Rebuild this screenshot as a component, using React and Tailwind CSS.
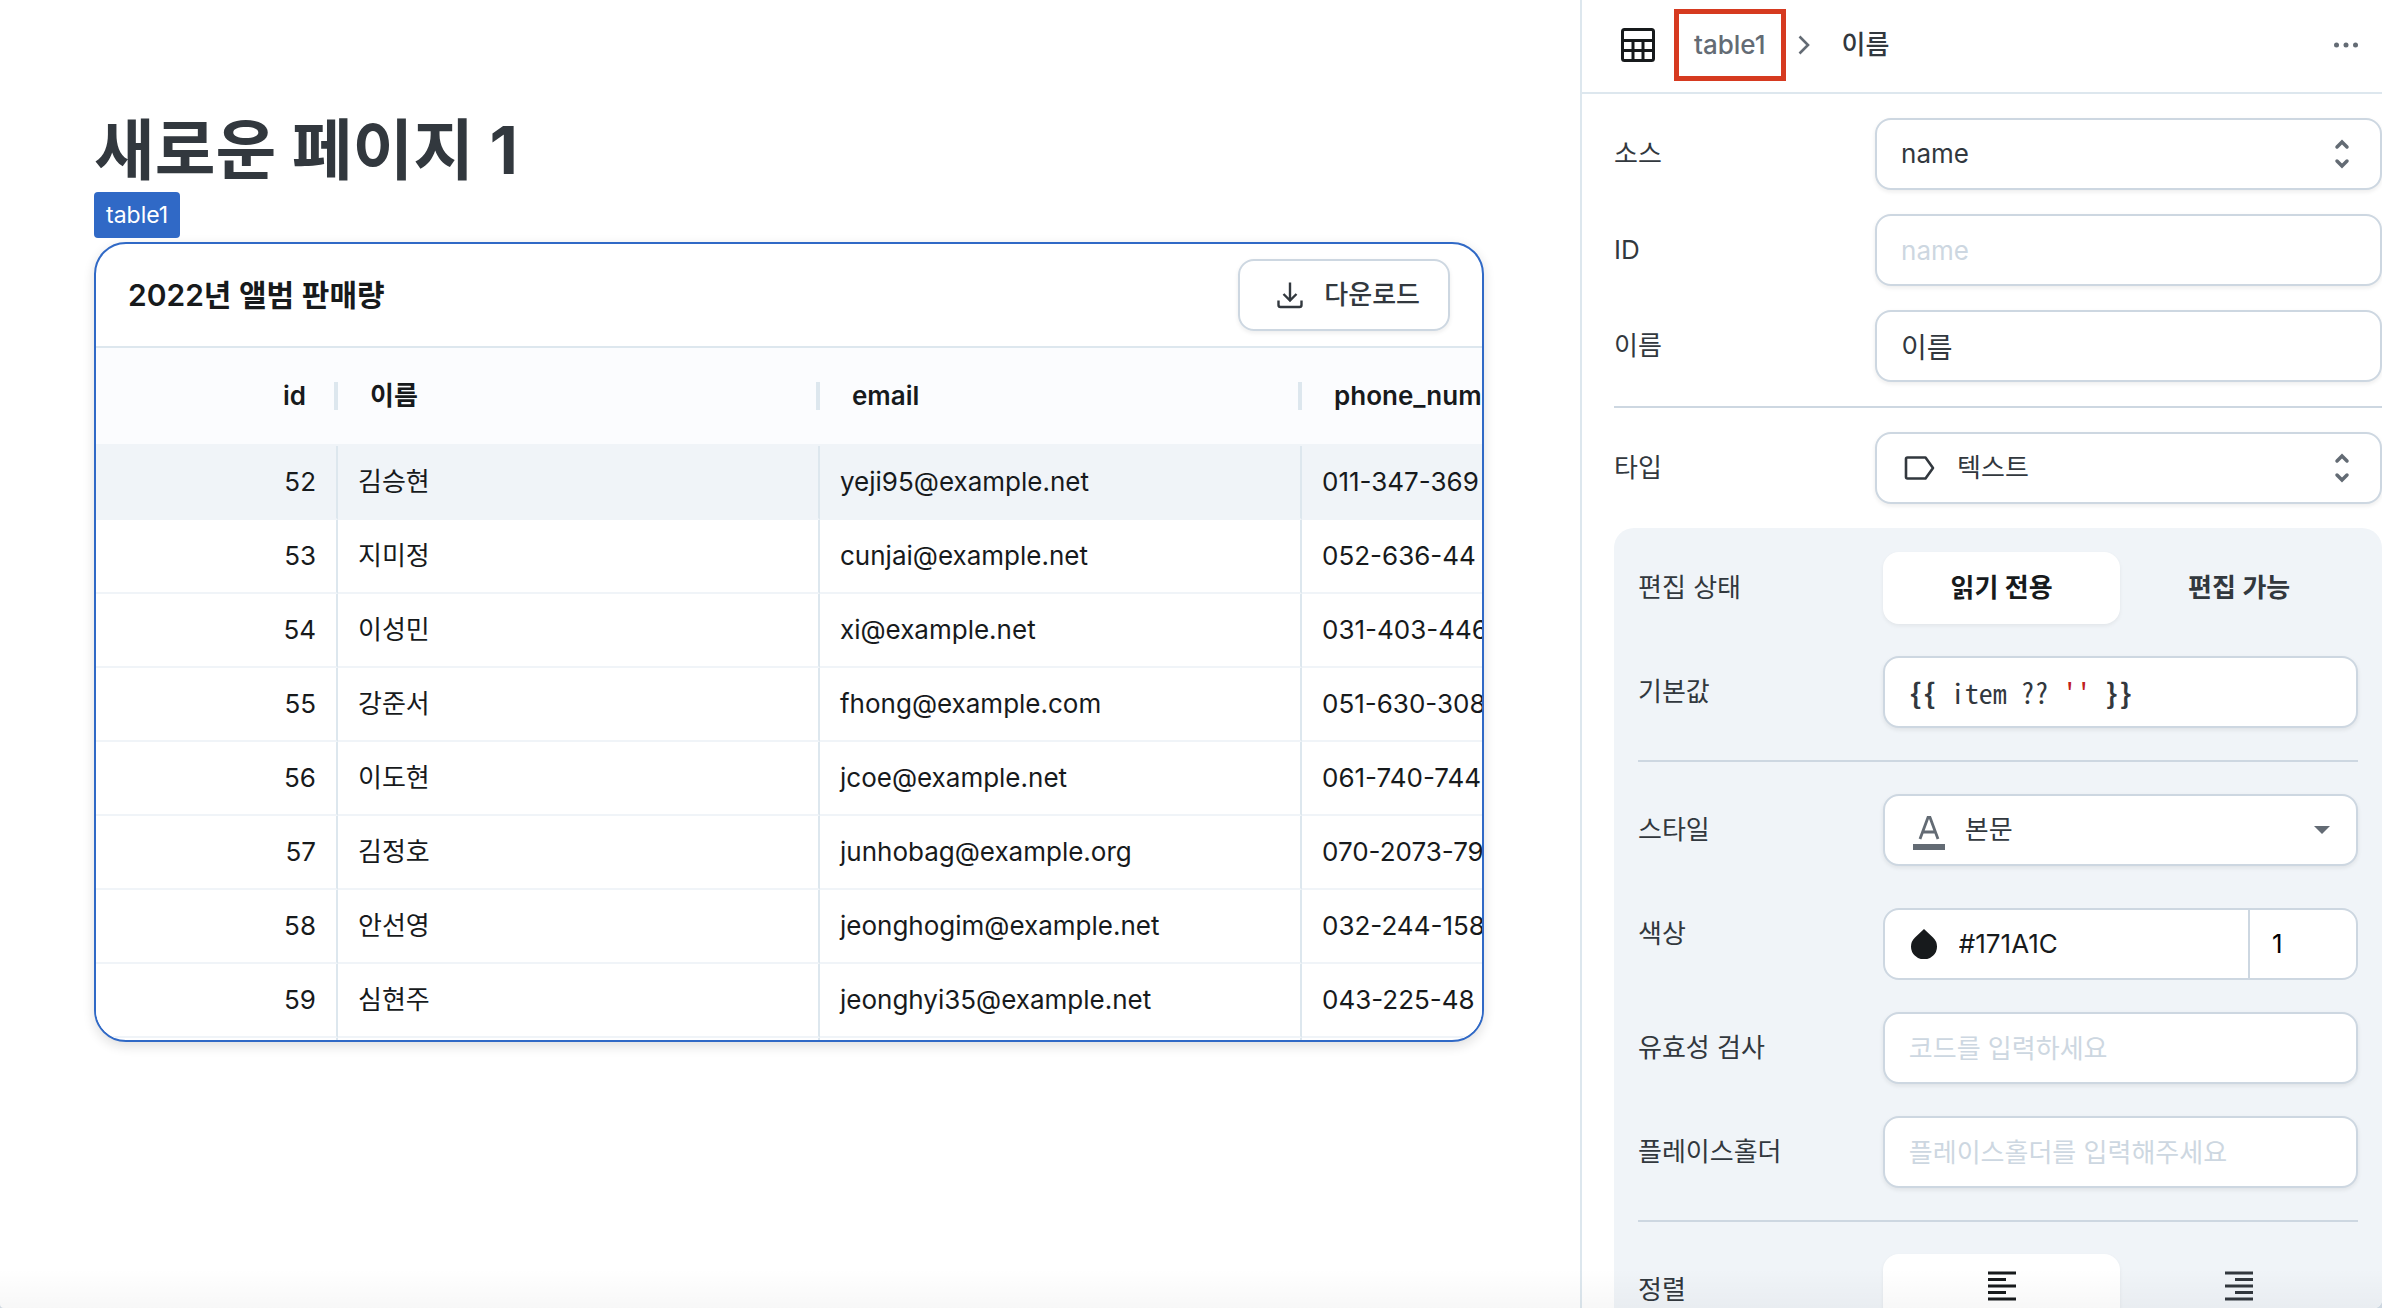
import React, { useState } from 'react';

const columns = ['이름', 'email', 'phone_num'];

const rows = [
  [52, '김승현', 'yeji95@example.net', '011-347-369'],
  [53, '지미정', 'cunjai@example.net', '052-636-44'],
  [54, '이성민', 'xi@example.net', '031-403-446'],
  [55, '강준서', 'fhong@example.com', '051-630-308'],
  [56, '이도현', 'jcoe@example.net', '061-740-744'],
  [57, '김정호', 'junhobag@example.org', '070-2073-79'],
  [58, '안선영', 'jeonghogim@example.net', '032-244-158'],
  [59, '심현주', 'jeonghyi35@example.net', '043-225-48'],
];

const field = 'h-[72px] w-full rounded-2xl border-2 border-[#cdd7e1] bg-white text-[#32383e] placeholder-[#cdd7e1] shadow-[0_2px_4px_rgba(21,21,21,0.08)] outline-none';

const UpDownIcon = () => (
  <svg className="pointer-events-none absolute top-1/2 right-8 h-8 w-4 -translate-y-1/2" viewBox="0 0 16 32" fill="none" stroke="#636b74" strokeWidth="3.5" strokeLinecap="round">
    <path d="M3 9l5-5 5 5M3 23l5 5 5-5" />
  </svg>
);

const TableIcon = () => (
  <svg className="h-9 w-9" viewBox="0 0 36 36" fill="none" stroke="#171a1c" strokeWidth="3">
    <rect x="2.5" y="2.5" width="31" height="31" rx="2" />
    <path d="M2.5 13.5h31M2.5 23.5h31M13 13.5v20M23 13.5v20" />
  </svg>
);

const DownloadIcon = () => (
  <svg className="h-7 w-7" viewBox="0 0 28 28" fill="none" stroke="#32383e" strokeWidth="2.4">
    <path d="M14 1.5v18M7.5 13l6.5 6.5 6.5-6.5M2.5 19.5v4.5q0 2 2 2h19q2 0 2-2v-4.5" />
  </svg>
);

const AlignIcon = ({ right }) => (
  <svg className="mb-2 h-8 w-7" viewBox="0 0 28 32" fill="none" stroke="currentColor" strokeWidth="2.8">
    {right ? (
      <path d="M0 3h28M10 9.5h18M0 16h28M10 22.5h18M0 29h28" />
    ) : (
      <path d="M0 3h28M0 9.5h18M0 16h28M0 22.5h18M0 29h28" />
    )}
  </svg>
);

const Row = ({ label, htmlFor, children }) => (
  <div className="grid grid-cols-[34fr_66fr]">
    <label htmlFor={htmlFor} className="flex h-[72px] items-center">{label}</label>
    {children}
  </div>
);

const Toggle = ({ options, value, onChange }) => (
  <div className="grid grid-cols-2">
    {options.map(({ id, content }) => (
      <button
        key={id}
        aria-label={id}
        onClick={() => onChange(id)}
        className={`flex h-[72px] items-center justify-center rounded-2xl font-semibold ${value === id ? 'bg-white text-[#171a1c] shadow-[0_2px_4px_rgba(21,21,21,0.06)]' : 'text-[#32383e]'}`}
      >
        {content}
      </button>
    ))}
  </div>
);

const DataTable = () => (
  <section className="overflow-hidden rounded-[32px] border-2 border-[#3069c6] bg-white text-[#171a1c] shadow-[0_4px_12px_rgba(21,21,21,0.14)]">
    <div className="flex h-[104px] items-center justify-between border-b-2 border-[#dde7ee] px-8">
      <h2 className="text-[30px] font-semibold">2022년 앨범 판매량</h2>
      <button className="flex h-[72px] items-center gap-5 rounded-2xl border-2 border-[#cdd7e1] pr-7 pl-9 font-medium text-[#32383e] shadow-[0_2px_4px_rgba(21,21,21,0.08)]">
        <DownloadIcon />
        다운로드
      </button>
    </div>
    <table className="w-[1688px] table-fixed border-separate border-spacing-0">
      <thead>
        <tr className="h-[98px] bg-[#fbfcfe]">
          <th className="w-[242px] border-b-2 border-[#f0f4f8] p-0 font-semibold">
            <div className="flex items-center justify-end gap-7">
              id
              <span className="h-7 w-1 bg-[#dde7ee]" />
            </div>
          </th>
          {columns.map((name) => (
            <th key={name} className="w-[482px] border-b-2 border-[#f0f4f8] p-0 pl-8 font-semibold">
              <div className="flex items-center justify-between">
                {name}
                <span className="h-7 w-1 bg-[#dde7ee]" />
              </div>
            </th>
          ))}
        </tr>
      </thead>
      <tbody>
        {rows.map((row, index) => (
          <tr key={row[0]} className={`h-[74px] ${index === 0 ? 'bg-[#f0f4f8]' : 'bg-white'}`}>
            {row.map((cell, i) => (
              <td
                key={i}
                className={`border-r-2 border-b-2 border-r-[#dde7ee] border-b-[#f0f4f8] px-5 py-0 ${i === 0 ? 'text-right' : ''}`}
              >
                {cell}
              </td>
            ))}
          </tr>
        ))}
        {/* top edge of the next row */}
        <tr className="h-[2px]">
          {rows[0].map((_, i) => (
            <td key={i} className="border-r-2 border-[#dde7ee] p-0" />
          ))}
        </tr>
      </tbody>
    </table>
  </section>
);

const Inspector = () => {
  const [editable, setEditable] = useState('읽기 전용');
  const [align, setAlign] = useState('왼쪽');

  return (
    <aside className="w-[802px] shrink-0 overflow-hidden border-l-2 border-[#dde7ee] text-[#32383e]">
      <header className="flex h-[94px] items-center border-b-2 border-[#dde7ee] pr-6 pb-[2px] pl-[38px] font-medium">
        <TableIcon />
        <a href="#table1" className="relative ml-[38px] text-[#636b74]">
          table1
          {/* highlight around the breadcrumb link */}
          <span className="absolute -inset-x-5 -inset-y-4 border-[5px] border-[#d63a20]" />
        </a>
        <svg className="ml-8 h-5 w-3" viewBox="0 0 12 20" fill="none" stroke="#636b74" strokeWidth="2.6">
          <path d="M1.5 1.5L10 10l-8.5 8.5" />
        </svg>
        <span className="ml-8">이름</span>
        <button aria-label="more" className="ml-auto">
          <svg className="h-6 w-6" viewBox="0 0 24 24" fill="#636b74">
            <circle cx="2.5" cy="12" r="2.5" />
            <circle cx="12" cy="12" r="2.5" />
            <circle cx="21.5" cy="12" r="2.5" />
          </svg>
        </button>
      </header>

      <div className="pt-6 pl-8">
        <div className="flex flex-col gap-6">
          <Row label="소스" htmlFor="source">
            <div className="relative">
              <select id="source" className={`${field} appearance-none px-6`}>
                <option>name</option>
              </select>
              <UpDownIcon />
            </div>
          </Row>
          <Row label="ID" htmlFor="column-id">
            <input id="column-id" placeholder="name" className={`${field} px-6`} />
          </Row>
          <Row label="이름" htmlFor="column-name">
            <input id="column-name" defaultValue="이름" className={`${field} px-6 text-[28px]`} />
          </Row>
          <hr className="border-t-2 border-[#cdd7e1]" />
          <Row label="타입" htmlFor="type">
            <div className="relative">
              <select id="type" className={`${field} appearance-none pl-20`}>
                <option>텍스트</option>
              </select>
              <svg className="pointer-events-none absolute top-6 left-7 h-6 w-8" viewBox="0 0 32 24" fill="none" stroke="#32383e" strokeWidth="2.6" strokeLinejoin="round">
                <path d="M3 3q0-1.500 1.500-1.500h18L30 12l-7.500 10.500h-18q-1.500 0-1.500-1.500z" />
              </svg>
              <UpDownIcon />
            </div>
          </Row>
        </div>

        <div className="mt-6 flex flex-col gap-8 rounded-[20px] bg-[#f0f4f8] p-6">
          <Row label="편집 상태">
            <Toggle
              options={[{ id: '읽기 전용', content: '읽기 전용' }, { id: '편집 가능', content: '편집 가능' }]}
              value={editable}
              onChange={setEditable}
            />
          </Row>
          <Row label="기본값">
            <div
              role="textbox"
              aria-label="기본값"
              contentEditable
              suppressContentEditableWarning
              className={`${field} flex items-center px-6 font-['Noto_Sans_Mono_CJK_KR','DejaVu_Sans_Mono',monospace] text-[28px]`}
            >
              <span className="whitespace-pre">
                <b>{'{{'}</b>
                {' item ?? '}
                <span className="text-[#c02020]">{"''"}</span>
                <b>{' }}'}</b>
              </span>
            </div>
          </Row>
          <hr className="border-t-2 border-[#cdd7e1]" />
          <Row label="스타일" htmlFor="text-style">
            <div className="relative">
              <select id="text-style" className={`${field} appearance-none pl-20`}>
                <option>본문</option>
              </select>
              <svg className="pointer-events-none absolute top-[20px] left-[30px] h-9 w-8" viewBox="0 0 32 36" fill="none" stroke="#636b74">
                <path d="M7 25L15 3.5h2L25 25M10 18h12" strokeWidth="2.8" />
                <path d="M0 33h32" strokeWidth="6" />
              </svg>
              <svg className="pointer-events-none absolute top-8 right-7 h-2 w-4" viewBox="0 0 16 8" fill="#636b74">
                <path d="M0 0h16L8 8z" />
              </svg>
            </div>
          </Row>
          <Row label="색상" htmlFor="color">
            <div className="mt-[10px] flex h-[72px] rounded-2xl border-2 border-[#cdd7e1] bg-white text-[#171a1c]">
              <div className="flex grow items-center gap-[22px] pl-[26px]">
                <svg className="h-[30px] w-[26px] shrink-0" viewBox="0 0 26 30" fill="#171a1c">
                  <path d="M13 0l9 8.5a13 12.7 0 1 1-18 0z" />
                </svg>
                <input id="color" defaultValue="#171A1C" className="w-full outline-none" />
              </div>
              <input aria-label="opacity" defaultValue="1" className="w-[108px] shrink-0 border-l-2 border-[#cdd7e1] pl-[22px] text-black outline-none" />
            </div>
          </Row>
          <Row label="유효성 검사" htmlFor="validation">
            <input id="validation" placeholder="코드를 입력하세요" className={`${field} px-6`} />
          </Row>
          <Row label="플레이스홀더" htmlFor="placeholder">
            <input id="placeholder" placeholder="플레이스홀더를 입력해주세요" className={`${field} px-6`} />
          </Row>
          <hr className="border-t-2 border-[#cdd7e1]" />
          <Row label="정렬">
            <Toggle
              options={[{ id: '왼쪽', content: <AlignIcon /> }, { id: '오른쪽', content: <AlignIcon right /> }]}
              value={align}
              onChange={setAlign}
            />
          </Row>
        </div>
      </div>
    </aside>
  );
};

const App = () => {
  return (
    <div className="h-screen bg-[#cdd7e1] font-['Inter','Noto_Sans_CJK_KR',sans-serif] text-[26px] leading-10">
      <div className="relative flex h-full overflow-hidden rounded-br-lg rounded-bl-sm bg-white">
        <main className="min-w-0 grow pt-[108px] pr-24 pl-[94px]">
          <h1 className="text-[66px] leading-[84px] font-bold text-[#32383e]">새로운 페이지 1</h1>
          <div className="mb-1 flex">
            <span className="flex h-[46px] items-center rounded bg-[#3069c6] px-3 text-[23px] text-white">table1</span>
          </div>
          <DataTable />
        </main>
        <Inspector />
        <div className="pointer-events-none absolute inset-x-0 bottom-0 h-10 bg-linear-to-b from-transparent to-black/3" />
      </div>
    </div>
  );
};

export default App;
